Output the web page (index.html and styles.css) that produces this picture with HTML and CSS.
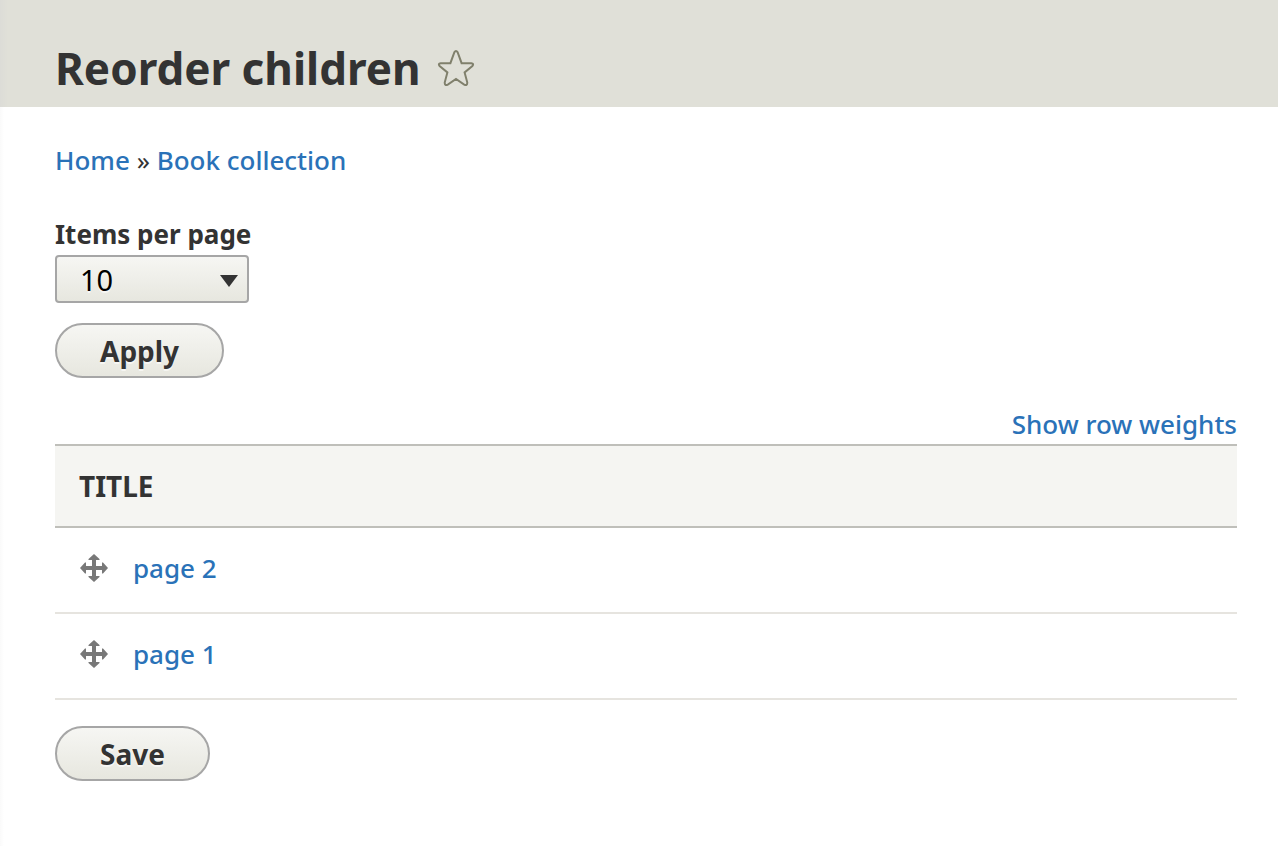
FILE: index.html
```html
<!DOCTYPE html>
<html lang="en">
<head>
<meta charset="utf-8">
<meta name="viewport" content="width=device-width, initial-scale=1">
<title>Reorder children</title>
<link rel="stylesheet" href="styles.css">
</head>
<body>
<header class="page-header">
  <h1 class="page-title">Reorder children</h1>
  <button class="shortcut" type="button" aria-label="Add to shortcuts">
    <svg class="shortcut-icon" viewBox="0 0 38 38" aria-hidden="true"><path d="M17.3 3.4Q19 .8 20.7 3.4L24.6 14.2L34.2 14.2Q37.4 14.8 35.4 17L27.6 23.4L30.3 33.6Q30.3 37 27.2 35.6L19 30L10.8 35.6Q7.7 37 7.7 33.6L10.4 23.4L2.6 17Q.6 14.8 3.8 14.2L13.4 14.2Z"/></svg>
  </button>
</header>
<main class="content">
  <nav class="breadcrumb" aria-label="Breadcrumb">
    <a href="#">Home</a> <span>»</span> <a href="#">Book collection</a>
  </nav>
  <form class="pager-form">
    <label class="field-label" for="items">Items per page</label>
    <select class="select" id="items"><option>10</option><option>25</option><option>50</option></select>
    <button class="button" type="button">Apply</button>
  </form>
  <form class="order-form">
    <div class="weights"><a href="#">Show row weights</a></div>
    <table class="order-table">
      <thead><tr><th scope="col">TITLE</th></tr></thead>
      <tbody>
        <tr><td><div class="cell"><svg class="handle" viewBox="0 0 28 28" aria-hidden="true"><path d="M14 0L19.5 5V6H16V12H22V8.5H23L28 14L23 19.5H22V16H16V22H19.5V23L14 28L8.500 23V22H12V16H6V19.5H5L0 14L5 8.500H6V12H12V6H8.500V5Z"/></svg><a href="#">page 2</a></div></td></tr>
        <tr><td><div class="cell"><svg class="handle" viewBox="0 0 28 28" aria-hidden="true"><path d="M14 0L19.5 5V6H16V12H22V8.5H23L28 14L23 19.5H22V16H16V22H19.5V23L14 28L8.500 23V22H12V16H6V19.5H5L0 14L5 8.500H6V12H12V6H8.500V5Z"/></svg><a href="#">page 1</a></div></td></tr>
      </tbody>
    </table>
    <button class="button" type="button">Save</button>
  </form>
</main>
</body>
</html>
```
FILE: styles.css
```css
* { box-sizing: border-box; }
body {
  margin: 0;
  background: linear-gradient(to right, #fafafa, #fff 4px);
  color: #333;
  font: 26px/40px "Lucida Grande", "Noto Sans", "Open Sans", sans-serif;
}
a { color: #2a72b8; font-weight: 500; text-decoration: none; }
.page-header {
  display: flex;
  align-items: center;
  gap: 16px;
  padding: 38px 40px 9px 55px;
  background: linear-gradient(to right, #dcdcd7, #e0e0d8 8px);
}
.page-title { margin: 0; font-size: 44px; line-height: 60px; font-weight: 700; }
.shortcut { display: flex; padding: 0; border: 0; background: none; }
.shortcut-icon { width: 38px; height: 38px; fill: none; stroke: #80806c; stroke-width: 2; }
.content { padding: 33px 41px 40px 55px; }
.breadcrumb { margin-bottom: 34px; }
.pager-form { display: flex; flex-direction: column; align-items: flex-start; }
.field-label { font-weight: 700; }
.select {
  appearance: none;
  width: 194px;
  height: 48px;
  margin: 1px 0 20px;
  padding: 0 23px;
  border: 2px solid #a6a6a6;
  border-radius: 4px;
  background:
    url("data:image/svg+xml,%3Csvg xmlns='http://www.w3.org/2000/svg' width='18' height='12'%3E%3Cpath d='M0 0H18L9 12Z' fill='%23333'/%3E%3C/svg%3E") no-repeat right 9px top 18px,
    linear-gradient(#f6f6f3, #e7e7df);
  color: #000;
  font: 29px "Lucida Grande", "Noto Sans", sans-serif;
  text-shadow: 0 2px #fff9;
}
.button {
  height: 55px;
  padding: 0 43px;
  border: 2px solid #a6a6a6;
  border-radius: 28px;
  background: linear-gradient(#f6f6f3, #e7e7df);
  color: #333;
  font: 700 28px "Lucida Grande", "Noto Sans", sans-serif;
  text-shadow: 0 2px #fff9;
}
.order-form { margin-top: 26px; }
.weights { text-align: right; }
.order-table { width: 100%; margin-bottom: 26px; border-collapse: separate; border-spacing: 0; }
.order-table th {
  padding: 20px 24px;
  border: solid #bfbfba;
  border-width: 2px 0;
  background: #f5f5f2;
  text-align: left;
  font-size: 28px;
  font-weight: 700;
}
.order-table td { padding: 20px 25px 24px; border-bottom: 2px solid #e6e4df; }
.cell { display: flex; align-items: center; gap: 25px; }
.handle { width: 28px; height: 28px; fill: #787878; }
```
